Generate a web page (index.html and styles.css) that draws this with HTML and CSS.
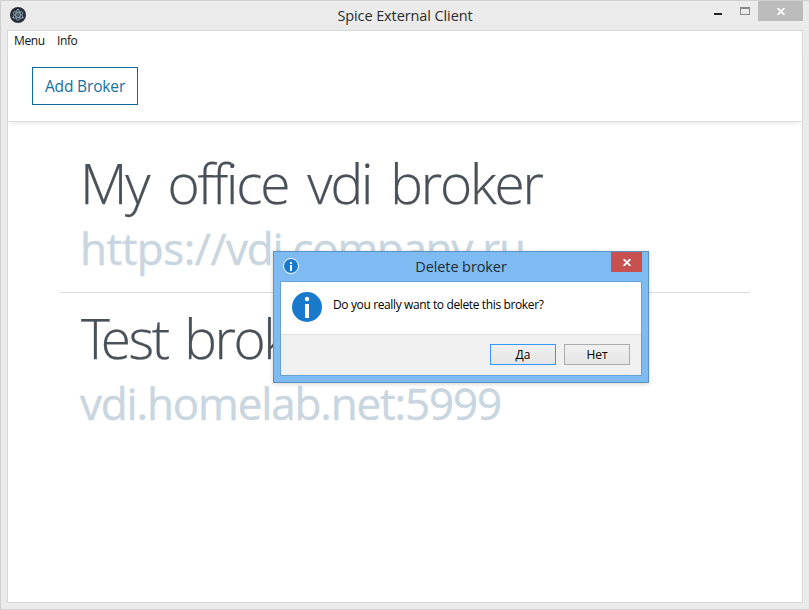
FILE: index.html
```html
<!DOCTYPE html>
<html lang="en">
<head>
<meta charset="utf-8">
<title>Spice External Client</title>
<link rel="stylesheet" href="styles.css">
</head>
<body>
<div class="window">
  <header class="titlebar">
    <svg class="app-icon" width="16" height="16" viewBox="0 0 16 16">
      <circle cx="8" cy="8" r="8" fill="#2b2e3a"/>
      <g fill="none" stroke="#9fc3cd" stroke-width=".7">
        <ellipse cx="8" cy="8" rx="5.4" ry="2.2" transform="rotate(30 8 8)"/>
        <ellipse cx="8" cy="8" rx="5.4" ry="2.2" transform="rotate(90 8 8)"/>
        <ellipse cx="8" cy="8" rx="5.4" ry="2.2" transform="rotate(150 8 8)"/>
      </g>
      <g fill="#9fc3cd"><circle cx="8" cy="8" r=".7"/><circle cx="3.2" cy="10.5" r=".8"/><circle cx="12.8" cy="10.5" r=".8"/><circle cx="8" cy="2.7" r=".7"/></g>
    </svg>
    <h1 class="title"><span class="title-text">Spice External Client</span></h1>
    <div class="controls">
      <span class="minimize"></span>
      <span class="maximize"></span>
      <span class="close"><svg width="8" height="7" viewBox="0 0 8 7"><path d="M.5 0L7.5 7M7.5 0L.5 7" stroke="#fff" stroke-width="1.8"/></svg></span>
    </div>
  </header>
  <main class="client">
    <nav class="menubar"><span class="menu-item menu-main">Menu</span><span class="menu-item menu-info">Info</span></nav>
    <div class="toolbar"><button class="add"><span class="add-text">Add Broker</span></button></div>
    <ul class="brokers">
      <li class="broker">
        <h2 class="name"><span class="name-office">My office vdi broker</span></h2>
        <p class="url"><span class="scheme">https://</span><span class="host">vdi.company.ru</span></p>
      </li>
      <li class="broker">
        <h2 class="name"><span class="name-test"><span class="cap">T</span>est broker</span></h2>
        <p class="url"><span class="url-test">vdi.homelab.net:5999</span></p>
      </li>
    </ul>
  </main>
</div>
<section class="dialog" role="dialog">
  <header class="dialog-bar">
    <svg class="dialog-icon" width="16" height="16" viewBox="0 0 16 16">
      <circle cx="8" cy="8" r="7.5" fill="#1979ca" stroke="#fff"/>
      <path d="M7 4h2v2H7zM7 7h2v6H7z" fill="#fff"/>
    </svg>
    <h2 class="dialog-title"><span class="dialog-title-text">Delete broker</span></h2>
    <span class="dialog-close"><svg width="8" height="7" viewBox="0 0 8 7"><path d="M.5 0L7.5 7M7.5 0L.5 7" stroke="#fff" stroke-width="1.8"/></svg></span>
  </header>
  <div class="dialog-body">
    <div class="message">
      <svg class="info" width="30" height="30" viewBox="0 0 30 30">
        <circle cx="15" cy="15" r="15" fill="#1979ca"/>
        <circle cx="15" cy="7" r="2.2" fill="#fff"/><path d="M13 12h4v14h-4z" fill="#fff"/>
      </svg>
      <p class="question"><span class="question-text">Do you really want to delete this broker?</span></p>
    </div>
    <footer class="actions"><button class="choice primary">Да</button><button class="choice">Нет</button></footer>
  </div>
</section>
</body>
</html>
```
FILE: styles.css
```css
* { box-sizing: border-box; }
body { margin: 0; font-family: "Open Sans", "Noto Sans", sans-serif; }
h1, h2, p, ul { margin: 0; padding: 0; font-weight: 400; }
button { margin: 0; padding: 0; font-family: inherit; }
span { white-space: nowrap; }

.window {
  width: 810px; height: 610px; padding: 0 6px 6px;
  display: flex; flex-direction: column;
  border: 1px solid #d0d0d0; background: #ebebeb;
}
.titlebar { height: 29px; flex: none; display: grid; grid-template-columns: 100px 1fr 100px; }
.app-icon { margin: 6px 0 0 3px; }
.title { text-align: center; font-size: 14.5px; line-height: 29px; color: #2b2b2b; }
.title-text { letter-spacing: -0.1px; }
.controls { display: flex; justify-content: flex-end; }
.minimize { width: 8px; height: 2px; margin: 12px 18px 0 0; background: #222; }
.maximize { width: 10px; height: 8px; margin: 6px 8px 0 0; border: 1px solid #8a8a8a; border-top-width: 2px; }
.close { width: 45px; height: 20px; display: flex; align-items: center; justify-content: center; background: #bcbcbc; }

.client { flex: 1; border: 1px solid #d7d7d7; background: #fff; }
.menubar { height: 20px; padding-left: 6px; display: flex; font-size: 12px; line-height: 20px; letter-spacing: -0.4px; color: #111; }
.menu-main { width: 43px; }
.toolbar { height: 71px; padding: 16px 24px; border-bottom: 1px solid #dedede; box-shadow: 0 4px 4px -2px rgba(0,0,0,.08); }
.add { width: 106px; height: 38px; border: 1px solid #0b6a98; background: #fff; color: #16719e; font-size: 15.5px; line-height: 37px; }
.add-text { letter-spacing: -0.15px; }

.brokers { list-style: none; padding: 16px 52px 0; }
.broker { height: 155px; padding: 6px 20px 0; border-bottom: 1px solid #dcdee0; }
.broker:last-child { border-bottom: 0; }
.name { height: 79px; font-size: 55px; line-height: 78px; font-weight: 300; letter-spacing: -2.2px; word-spacing: 7px; color: #495057; -webkit-text-stroke: 0.25px #495057; }
.name-test { margin-left: 1px; letter-spacing: -2.5px; word-spacing: 5px; }
.cap { letter-spacing: -9px; }
.url { height: 50px; font-size: 44px; line-height: 50px; letter-spacing: -1px; color: #c9d6e0; -webkit-text-stroke: 0.4px #c9d6e0; }
.scheme { letter-spacing: -0.5px; }
.host { letter-spacing: -1.3px; }
.url-test { letter-spacing: -1.15px; }

.dialog {
  position: absolute; left: 273px; top: 251px; width: 376px; height: 132px; padding: 0 6px 6px;
  display: flex; flex-direction: column;
  border: 1px solid #5c91c4; background: #7ebbf2; box-shadow: 0 1px 4px rgba(0,0,0,.18);
}
.dialog-bar { height: 29px; flex: none; display: grid; grid-template-columns: 31px 1fr 31px; }
.dialog-icon { margin: 6px 0 0 3px; }
.dialog-title { text-align: center; font-size: 14.5px; line-height: 30px; letter-spacing: -0.1px; color: #222b35; }
.dialog-close { height: 20px; display: flex; align-items: center; justify-content: center; background: #c75050; }
.dialog-body { flex: 1; border: 1px solid #659fd4; background: #fff; display: flex; flex-direction: column; }
.message { height: 52px; display: flex; padding: 11px 0 0 11px; gap: 11px; }
.info { margin-top: -1px; margin-bottom: 1px; }
.question { font-size: 12px; line-height: 24px; letter-spacing: -0.37px; color: #000; }
.actions { flex: 1; display: flex; justify-content: flex-end; gap: 8px; padding: 9px 11px 0 0; border-top: 1px solid #dfdfdf; background: #f0f0f0; }
.choice { width: 66px; height: 21px; border: 1px solid #acacac; background: linear-gradient(#f0f0f0, #e5e5e5); font-size: 12px; line-height: 19px; color: #000; }
.primary { border-color: #3399ff; }
```
